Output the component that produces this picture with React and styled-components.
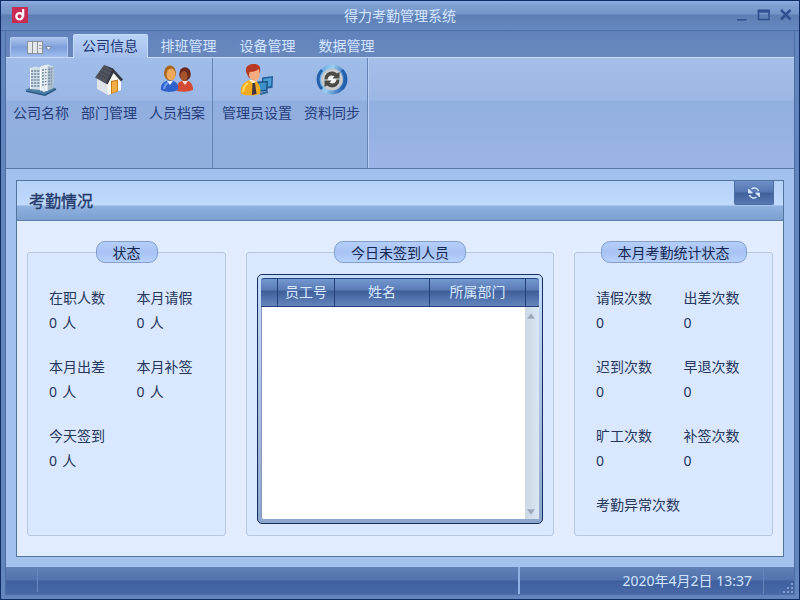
import React, { Component } from 'react';
import styled, { createGlobalStyle } from 'styled-components';

const GlobalStyle = createGlobalStyle`
  * {
    box-sizing: border-box;
  }

  body {
    margin: 0;
    overflow: hidden;
    font-family: "Noto Sans", "Noto Sans CJK SC", sans-serif;
    font-size: 14px;
    color: #26365c;
  }
`

const BuildingIcon = () => (
  <svg width="32" height="32" viewBox="0 0 32 32">
    <path d="M0 26 L9 22 L31 24 L20 31 Z" fill="#4a7fa8" />
    <path d="M1 27 L20 31.2 L31 25" fill="none" stroke="#2c5680" strokeWidth="1.500" />
    <path d="M5 4 L10 2.500 L16 3.500 L16 26 L5 25 Z" fill="#d3dfe6" />
    <path d="M16 2 L23 .5 L29 3 L28 24 L19 28 L15 26 Z" fill="#e3ecf0" />
    <path d="M22 2 L29 3 L28 24 L22 27 Z" fill="#a9bccb" />
    <path d="M6 7h9M6 10h9M6 13h9M6 16h9M6 19h9M6 22h9M17 6l10-1M17 9l10-1M17 12l10-1M17 15l10-1M17 18l10-1M17 21l10-1" stroke="#6f879c" strokeWidth="1.300" strokeDasharray="2.200 .9" />
    <path d="M15.500 3.500v23M22 2v25M5.500 4v21" stroke="#fafdfd" />
  </svg>
)

const HouseIcon = () => (
  <svg width="32" height="32" viewBox="0 0 32 32">
    <path d="M4 13 L15 19 L15 31 L4 25 Z" fill="#dfe3e9" />
    <path d="M14 20 L21 7 L28 15 L28 26 L15 31 Z" fill="#faf8f5" />
    <path d="M18 17 L25 15.500 L25 27.500 L18 30 Z" fill="#c97c1c" />
    <path d="M19 18 L24 16.800 L24 27 L19 29 Z" fill="#f2ad49" />
    <path d="M2 13.500 L11 1 L20.500 5 L13.500 20 Z" fill="#50545f" />
    <path d="M11 1 L20 4.500 L30 15.500 L28 17.500 L20.500 9 L14.500 20.500 L13 19.500 L19 6 Z" fill="#343843" />
    <path d="M9 4l9 4M7 7l9 4.500M5 10l9.500 5" stroke="#3b3f4a" strokeWidth=".8" />
  </svg>
)

const PeopleIcon = () => (
  <svg width="34" height="32" viewBox="0 0 34 32">
    <path d="M17 27 C16 20 19 17 25 16 C31 17 33 21 33 26 Q26 29 17 27Z" fill="#d54a32" />
    <path d="M22 17 L25 21 L28 17" fill="#f5ded3" />
    <ellipse cx="25" cy="10" rx="5.800" ry="6.800" fill="#69281d" />
    <ellipse cx="24" cy="12" rx="3.600" ry="5" fill="#a8522c" />
    <path d="M1 26 C0 19 5 17 10 16 C16 17 19 20 18 26 Q9 30 1 26Z" fill="#2f62cc" />
    <path d="M4 25 Q5 20 8 19" stroke="#6d9cf0" strokeWidth="2" fill="none" />
    <path d="M7 17 L10 21 L13 17" fill="#edf4ff" />
    <ellipse cx="10" cy="9" rx="6" ry="7.500" fill="#a8651f" />
    <ellipse cx="11" cy="10.500" rx="4.500" ry="6" fill="#eea859" />
  </svg>
)

const AdminIcon = () => (
  <svg width="34" height="32" viewBox="0 0 34 32">
    <path d="M22 13.500 L33 12 L32.500 24 L22 25 Z" fill="#22609c" />
    <path d="M23.500 15 L31.500 13.800 L31 22 L23.500 23 Z" fill="#489fd3" />
    <path d="M17 17.500 L28 17 L27.500 27 L18 28 Z" fill="#205387" />
    <path d="M19 19 L26.500 18.500 L26 25.500 L19 26.500 Z" fill="#3a92c9" />
    <path d="M20 30 L28 28" stroke="#2e6796" strokeWidth="2" />
    <path d="M1 30 C0 22 3 19 9 16 L16 17 C20 20 21 25 20 30 Q10 33 1 30 Z" fill="#f0ac1e" />
    <path d="M3 28 Q4 21 8 19" fill="none" stroke="#ffd65c" strokeWidth="2" />
    <path d="M9 16 L13 20 L17 16" fill="#fff1d4" />
    <path d="M12.500 19 L15 19 L16.500 30 L12 31 Z" fill="#403440" />
    <path d="M6 8 C5 2 9 0 14 0 C19 0 21 3 20 8 L17 12 L9 14 Z" fill="#b93a22" />
    <path d="M9.500 8 Q15 8 19 5 Q21 14 16 17 Q11 17 9 12Z" fill="#f4ac7e" />
  </svg>
)

const SyncIcon = () => (
  <svg width="32" height="32" viewBox="0 0 32 32">
    <defs>
      <linearGradient id="ring" x1="0" y1="0" x2="1" y2=".3">
        <stop offset="0" stopColor="#4d96dc" />
        <stop offset=".5" stopColor="#9bcff2" />
        <stop offset="1" stopColor="#2a64b4" />
      </linearGradient>
      <radialGradient id="disc">
        <stop offset="0" stopColor="#fff" />
        <stop offset="1" stopColor="#bfc4c6" />
      </radialGradient>
    </defs>
    <circle cx="16" cy="15.500" r="15" fill="url(#ring)" />
    <path d="M6 6 A13.500 13.500 0 0 0 6 25 M26 6 A13.500 13.500 0 0 1 26 25" fill="none" stroke="#2360ac" strokeWidth="3" />
    <circle cx="16" cy="15.500" r="11" fill="url(#disc)" />
    <path d="M8.500 15.500 C8.500 8 16 5.500 21 9.500 L23.500 8 V14.500 H16.500 L18.500 12.300 C15 10.500 12 12 11.500 15.500 Z" fill="#4c4b45" />
    <path d="M23.500 15.500 C23.500 23 16 25.500 11 21.500 L8.500 23 V16.500 H15.500 L13.500 18.700 C17 20.500 20 19 20.500 15.500 Z" fill="#4c4b45" />
  </svg>
)

const RefreshIcon = () => (
  <svg width="14" height="14" viewBox="0 0 14 14" fill="none" stroke="#dcecff" strokeWidth="1.500">
    <path d="M4.500 3 C7 1 10.500 2 11.500 5" />
    <path d="M9.500 11 C7 13 3.500 12 2.500 9" />
    <path d="M1.500 3 V7 H5.500 Z M12.500 11 V7 H8.500 Z" fill="#dcecff" strokeWidth=".8" />
  </svg>
)

const LogoIcon = () => (
  <svg width="16" height="16" viewBox="0 0 16 16">
    <rect width="16" height="16" fill="#c82c55" />
    <circle cx="7.500" cy="9.300" r="3.200" fill="none" stroke="#fff" strokeWidth="2.200" />
    <path d="M11.200 2 V9.500" stroke="#fff" strokeWidth="2.200" />
  </svg>
)

const WindowIcons = () => (
  <svg width="56" height="14" viewBox="0 0 56 14" fill="none" stroke="#315192">
    <path d="M1 11.800 H10.500" strokeWidth="1.600" />
    <rect x="22.500" y="2.500" width="10.500" height="9" strokeWidth="1.600" />
    <path d="M21.700 3.200 H33.800" strokeWidth="3" />
    <path d="M45 2 L54.500 11.500 M54.500 2 L45 11.500" strokeWidth="2.600" />
  </svg>
)

const MenuIcon = () => (
  <svg width="26" height="14" viewBox="0 0 26 14">
    <rect x=".5" y=".5" width="15" height="12" fill="#e4e7ea" stroke="#8a919b" />
    <path d="M5.500 1 V13M10.500 1 V13" stroke="#8a919b" />
    <path d="M12 4.500h3M12 7.500h3" stroke="#a5abb3" />
    <path d="M18.500 5.500 H24.500 L21.500 9.500 Z" fill="#dde7f5" stroke="#7689a9" />
  </svg>
)

const GripIcon = () => (
  <svg width="12" height="12" viewBox="0 0 12 12" fill="#7e9dd0">
    <path d="M9 1h2v2H9zM9 5h2v2H9zM9 9h2v2H9zM5 5h2v2H5zM5 9h2v2H5zM1 9h2v2H1z" />
  </svg>
)

const Arrow = ({ down }) => (
  <svg width="8" height="6" viewBox="0 0 9 6">
    <path d={down ? "M0 0 H9 L4.500 6 Z" : "M0 6 H9 L4.500 0 Z"} fill="#9ba9b9" />
  </svg>
)

class App extends Component {
  state = {
    tabs: ["公司信息", "排班管理", "设备管理", "数据管理"],
    selectedTab: "公司信息",
    tools: [
      {
        id: 1,
        width: 207,
        items: [
          {name: "公司名称", width: 68, icon: <BuildingIcon />},
          {name: "部门管理", width: 68, icon: <HouseIcon />},
          {name: "人员档案", width: 68, icon: <PeopleIcon />}
        ]
      },
      {
        id: 2,
        width: 155,
        items: [
          {name: "管理员设置", width: 82, icon: <AdminIcon />},
          {name: "资料同步", width: 68, icon: <SyncIcon />}
        ]
      }
    ],
    status: [
      {name: "在职人数", value: "0 人"},
      {name: "本月请假", value: "0 人"},
      {name: "本月出差", value: "0 人"},
      {name: "本月补签", value: "0 人"},
      {name: "今天签到", value: "0 人"}
    ],
    month: [
      {name: "请假次数", value: "0"},
      {name: "出差次数", value: "0"},
      {name: "迟到次数", value: "0"},
      {name: "早退次数", value: "0"},
      {name: "旷工次数", value: "0"},
      {name: "补签次数", value: "0"},
      {name: "考勤异常次数", value: ""}
    ],
    columns: ["", "员工号", "姓名", "所属部门", ""]
  }

  handleTab = (tab) => {
    this.setState({selectedTab: tab})
  }

  renderStats(list) {
    return (
      <Stats>
        {
          list.map(item => (
            <Stat key={item.name}>
              <StatLine>{item.name}</StatLine>
              <StatLine>{item.value}</StatLine>
            </Stat>
          ))
        }
      </Stats>
    )
  }

  render() {
    let {tabs, selectedTab, tools, status, month, columns} = this.state

    return (
      <>
        <GlobalStyle />
        <Window>
          <TitleBar>
            <LogoIcon />
            <Title>得力考勤管理系统</Title>
            <WindowIcons />
          </TitleBar>
          <Content>
            <TabBar>
              <MenuButton><MenuIcon /></MenuButton>
              {
                tabs.map(tab => (
                  <Tab key={tab} $active={tab === selectedTab} onClick={() => this.handleTab(tab)}>{tab}</Tab>
                ))
              }
            </TabBar>
            <Ribbon>
              {
                tools.map(group => (
                  <ToolGroup key={group.id} $width={group.width}>
                    {
                      group.items.map(item => (
                        <Tool key={item.name} $width={item.width}>
                          {item.icon}
                          <ToolName>{item.name}</ToolName>
                        </Tool>
                      ))
                    }
                  </ToolGroup>
                ))
              }
            </Ribbon>
            <Body>
              <Panel>
                <PanelHeader>
                  <PanelTitle>考勤情况</PanelTitle>
                  <RefreshButton><RefreshIcon /></RefreshButton>
                </PanelHeader>
                <Groups>
                  <Group>
                    <Legend $width={62}>状态</Legend>
                    {this.renderStats(status)}
                  </Group>
                  <Group>
                    <Legend $width={132}>今日未签到人员</Legend>
                    <Table>
                      <TableHead>
                        {columns.map((col, i) => <HeadCell key={i}>{col}</HeadCell>)}
                      </TableHead>
                      <TableBody>
                        <ScrollBar>
                          <Arrow />
                          <Arrow down />
                        </ScrollBar>
                      </TableBody>
                    </Table>
                  </Group>
                  <Group>
                    <Legend $width={146}>本月考勤统计状态</Legend>
                    {this.renderStats(month)}
                  </Group>
                </Groups>
              </Panel>
            </Body>
            <StatusBar>
              <StatusCell />
              <StatusCell $bright />
              <StatusDate>2020年4月2日 13:37</StatusDate>
              <Grip><GripIcon /></Grip>
            </StatusBar>
          </Content>
        </Window>
      </>
    );
  }
}

const Window = styled.div`
  display: flex;
  flex-direction: column;
  width: 800px;
  height: 600px;
  border: 1px solid #102d68;
  background: #6285bd;
`

const TitleBar = styled.header`
  display: flex;
  align-items: center;
  justify-content: space-between;
  flex: none;
  height: 30px;
  padding: 0 7px 2px 11px;
  border-bottom: 1px solid #4b6ca5;
  background: linear-gradient(#8eaee2 0, #7f9fd3 4px, #7495c7 13px, #5c7eb4 14px, #6689c0 29px);
`

const Title = styled.h1`
  margin: 3px 0 0 36px;
  font-size: 14px;
  line-height: 20px;
  font-weight: 400;
  color: #d4e6ff;
`

const Content = styled.div`
  display: flex;
  flex-direction: column;
  flex: 1;
  margin: 0 4px 5px;
  border: 1px solid #4c6da6;
  border-top: 0;
`

const TabBar = styled.nav`
  display: flex;
  align-items: flex-end;
  flex: none;
  height: 27px;
  padding-left: 4px;
  border-bottom: 1px solid #c7ddfb;
  background: linear-gradient(#6282bd, #6888bd);
`

const MenuButton = styled.button`
  display: flex;
  align-items: center;
  justify-content: center;
  width: 58px;
  height: 20px;
  margin-right: 5px;
  padding: 1px 0 0 2px;
  border: 1px solid #b1c9f1;
  border-bottom: 0;
  border-radius: 2px 2px 0 0;
  background: linear-gradient(#a9c2ee, #7f9fd9 50%, #9ebcf0);
`

const Tab = styled.a`
  width: ${({ $active }) => $active ? 75 : 79}px;
  height: ${({ $active }) => $active ? 24 : 23}px;
  margin-right: ${({ $active }) => $active ? 1 : 0}px;
  margin-bottom: ${({ $active }) => $active ? -1 : 0}px;
  padding-right: ${({ $active }) => $active ? 1 : 0}px;
  border: 1px solid ${({ $active }) => $active ? '#c4dafa' : 'transparent'};
  border-bottom: 0;
  border-radius: 2px 2px 0 0;
  background: ${({ $active }) => $active ? 'linear-gradient(#b9d2f7, #a2beea)' : 'none'};
  color: ${({ $active }) => $active ? '#1d3474' : '#d3e5ff'};
  line-height: ${({ $active }) => $active ? 22 : 21}px;
  text-align: center;
  cursor: default;
`

const Ribbon = styled.div`
  display: flex;
  flex: none;
  height: 111px;
  border-bottom: 1px solid #58789f;
  background: linear-gradient(#a4c0e9 0, #9bb7e3 42px, #91afdf 43px, #9bb5e6 110px);
`

const ToolGroup = styled.div`
  display: flex;
  width: ${({ $width }) => $width}px;
  padding: 6px 0 0 1px;
  border-right: 1px solid #6684b5;
  box-shadow: 1px 0 #b7cff5;
  background: linear-gradient(#a0bce8 0, #9bb7e5 42px, #91aee0 43px, #91afdc 110px);

  & + & {
    padding-left: 3px;
  }
`

const Tool = styled.div`
  display: flex;
  flex-direction: column;
  align-items: center;
  flex: none;
  width: ${({ $width }) => $width}px;
`

const ToolName = styled.span`
  margin-top: 7px;
  line-height: 20px;
  color: #263d7b;
  white-space: nowrap;
`

const Body = styled.main`
  flex: 1;
  padding: 11px 10px 10px;
  background: #a3c1ed;
`

const Panel = styled.section`
  display: flex;
  flex-direction: column;
  height: 377px;
  border: 1px solid #53749f;
  background: #e1edfe;
`

const PanelHeader = styled.div`
  display: flex;
  justify-content: space-between;
  flex: none;
  height: 40px;
  padding: 0 9px 0 12px;
  border-bottom: 1px solid #5c7fae;
  background: linear-gradient(#b6d1f8 0, #bfdafc 24px, #8fb1e0 25px, #7ba0d0 39px);
`

const PanelTitle = styled.h2`
  margin: 9px 0 0;
  font-size: 16px;
  line-height: 22px;
  font-weight: 400;
  -webkit-text-stroke: .4px #233a6b;
  color: #233a6b;
`

const RefreshButton = styled.button`
  display: flex;
  align-items: center;
  justify-content: center;
  width: 40px;
  height: 24px;
  padding: 0;
  border: 1px solid #4b6ba3;
  border-top: 0;
  border-radius: 0 0 2px 2px;
  background: linear-gradient(#6e8fc7 0, #5576b1 11px, #405f9d 12px, #5879b2 23px);
`

const Groups = styled.div`
  display: grid;
  grid-template-columns: 199px 308px 199px;
  column-gap: 20px;
  height: 315px;
  padding: 31px 10px 0;
`

const Group = styled.div`
  display: flex;
  flex-direction: column;
  align-items: center;
  height: 284px;
  border: 1px solid #b5c7e1;
  border-radius: 3px;
  background: #d9e8fe;
`

const Legend = styled.div`
  flex: none;
  width: ${({ $width }) => $width}px;
  height: 22px;
  margin-top: -12px;
  border: 1px solid #829fcd;
  border-radius: 9px;
  background: linear-gradient(#b5cffa, #a7c3f4 50%, #b7d2fc);
  line-height: 21px;
  text-align: center;
  color: #152650;
`

const Stats = styled.div`
  display: grid;
  grid-template-columns: 87.5px 87.5px;
  grid-auto-rows: 69px;
  width: 197px;
  padding: 22px 0 0 21px;
`

const Stat = styled.div`
  white-space: nowrap;
`

const StatLine = styled.div`
  height: 25px;
  line-height: 25px;
  word-spacing: 1.5px;
`

const Table = styled.div`
  display: flex;
  flex-direction: column;
  width: 286px;
  height: 250px;
  margin-top: 11px;
  padding: 3px 3px 4px;
  border: 1px solid #142f60;
  border-radius: 5px;
  background: linear-gradient(#c4dcfb, #8da6cc);
`

const TableHead = styled.div`
  display: grid;
  grid-template-columns: 17px 57px 95px 96px 13px;
  flex: none;
  height: 29px;
  border: 1px solid #243f7a;
  border-width: 1px 0;
  border-radius: 3px 3px 0 0;
  background: linear-gradient(#7397cf 0, #5a7bb6 11px, #3f5f9c 12px, #6484bc 27px);
`

const HeadCell = styled.div`
  border-right: 1px solid #243f7a;
  line-height: 25px;
  text-align: center;
  color: #d8e9ff;

  &:last-child {
    border-right: 0;
  }
`

const TableBody = styled.div`
  display: flex;
  justify-content: flex-end;
  flex: 1;
  border-left: 1px solid #8299bd;
  border-radius: 0 0 2px 2px;
  background: #fff;
`

const ScrollBar = styled.div`
  display: flex;
  flex-direction: column;
  align-items: center;
  justify-content: space-between;
  width: 14px;
  padding: 6px 2px 4px 0;
  background: linear-gradient(90deg, #ccd9e5, #dae6f3);
`

const StatusBar = styled.footer`
  display: flex;
  flex: none;
  height: 27px;
  background: linear-gradient(#5f81b7 0, #5272ab 13px, #3f609e 14px, #4767a5 26px);
`

const StatusCell = styled.div`
  width: ${({ $bright }) => $bright ? 482 : 32}px;
  margin-bottom: ${({ $bright }) => $bright ? 0 : 2}px;
  border-right: ${({ $bright }) => $bright ? '2px solid #90b1e4' : '1px solid #6686bd'};
`

const StatusDate = styled.div`
  flex: 1;
  padding-right: 11px;
  border-right: 1px solid #6585bc;
  line-height: 27px;
  text-align: right;
  color: #d2e4ff;
`

const Grip = styled.div`
  display: flex;
  align-items: flex-end;
  justify-content: flex-end;
  width: 30px;
`

export default App;
